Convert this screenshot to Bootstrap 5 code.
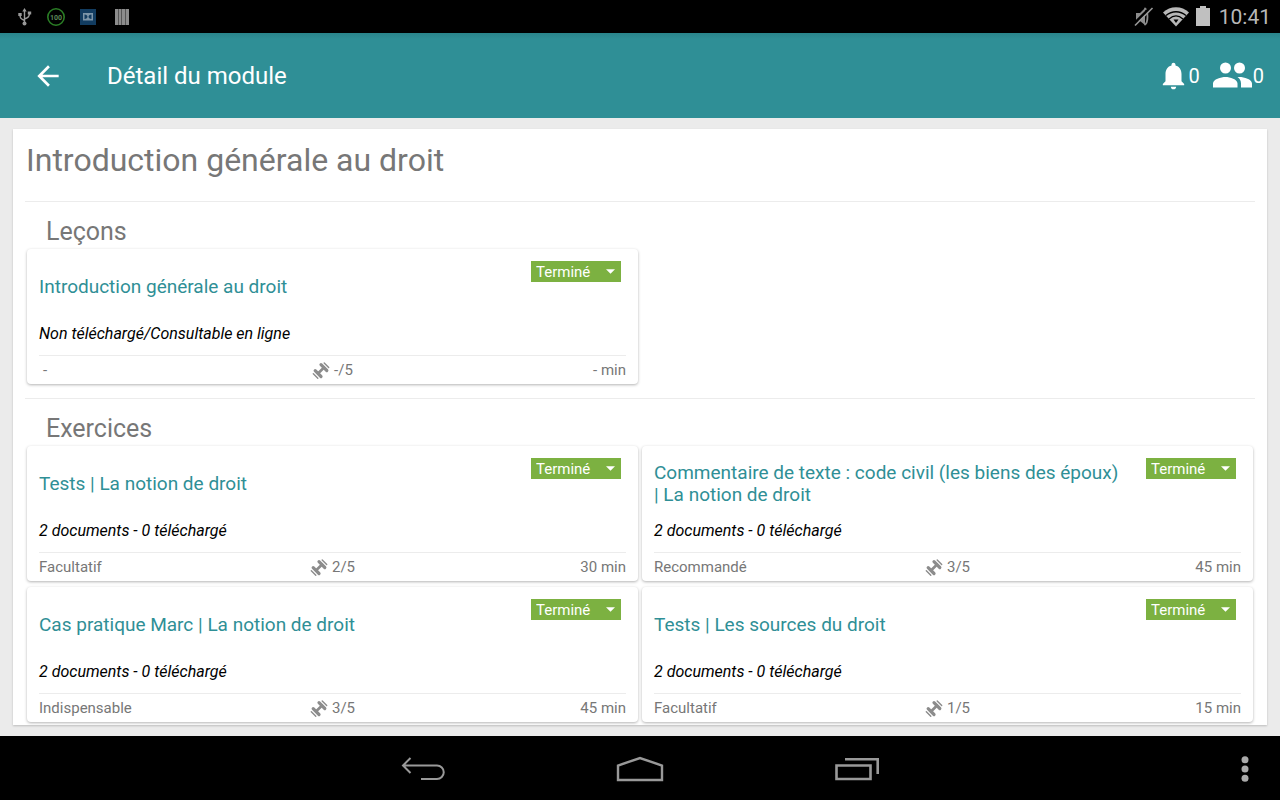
<!DOCTYPE html>
<html lang="fr">
<head>
<meta charset="utf-8">
<meta name="viewport" content="width=device-width, initial-scale=1">
<title>Détail du module</title>
<link href="https://cdn.jsdelivr.net/npm/bootstrap@5.3.0/dist/css/bootstrap.min.css" rel="stylesheet">
<style>
  body { font-family: Roboto, "Liberation Sans", sans-serif; background: #ebebeb; color: #777; }
  .status-bar { height: 33px; background: #000; color: #b8b8b8; font-size: 21px; padding: 0 9px 0 18px; }
  .status-bar .clock { padding-top: 2px; }
  .notices { gap: 15px; }
  .app-bar { height: 85px; background: linear-gradient(#2a858b, #2f8f96 6px); color: #fff; padding: 0 16px 0 32px; }
  .app-bar h1 { font-size: 24px; padding: 2px 0 0 43px; }
  .app-bar .counter { font-size: 20px; color: #fff; }
  .panel { background: #fff; margin: 11px 13px; padding: 0 12px; box-shadow: 0 1px 2px rgba(0,0,0,.2); scrollbar-width: none; }
  .module-title { font-size: 32px; line-height: 40px; padding: 11px 0 21px 1px; }
  .section-block { border-top: 1px solid #ececec; padding: 16px 2px 14px; }
  .section-title { font-size: 25px; line-height: 28px; padding: 0 0 3px 19px; }
  .tiles { display: grid; grid-template-columns: 1fr 1fr; gap: 6px 4px; }
  .tile { border: 0; border-radius: 4px; padding: 12px 12px 0; box-shadow: 0 1px 3px rgba(0,0,0,.3); color: #777; }
  .tile-head { min-height: 50px; }
  .tile-head h3 { font-size: 19px; line-height: 22px; max-width: 470px; padding-top: 2px; }
  .tile-head a { color: #2f8f96; }
  .state { width: 90px; height: 21px; flex: none; margin-right: 5px; padding: 1px 5px 0; border: 0; border-radius: 0; color: #fff; font-size: 15px; line-height: 20px;
    background: #7cb141 url("data:image/svg+xml,%3Csvg xmlns='http://www.w3.org/2000/svg' viewBox='0 0 10 5'%3E%3Cpath fill='%23fff' d='M0 0h10L5 5z'/%3E%3C/svg%3E") no-repeat right 6px center / 9px 5px; }
  .docs { font-size: 16px; line-height: 24px; color: #000; padding: 11px 0 9px; }
  .tile-foot { border-top: 1px solid #ececec; font-size: 15px; line-height: 28px; display: grid; grid-template-columns: 1fr auto 1fr; }
  .nav-bar { height: 64px; background: #000; display: grid; grid-template-columns: 1fr auto 1fr; padding-top: 2px; }
  .key { width: 217px; }
  .more { width: 70px; justify-self: end; }
  .bare { border: 0; background: none; padding: 0; }
</style>
</head>
<body class="vh-100 d-flex flex-column overflow-hidden">

<svg class="d-none" aria-hidden="true">
  <symbol id="dumbbell" viewBox="0 0 18 18">
    <g fill="none" stroke="#8c8c8c" stroke-linecap="round">
      <path stroke-width="2.600" d="M6 11.500l6-6"/>
      <path stroke-width="3.200" d="M3.200 8.700l5.800 5.800M9 2.700l5.800 5.800"/>
      <path stroke-width="1.400" d="M1.300 11.700l4.500 4.500M12.200 1l4.500 4.500"/>
    </g>
  </symbol>
</svg>

<div class="status-bar d-flex align-items-center justify-content-between">
  <div class="notices d-flex align-items-center">
    <svg width="14" height="18" viewBox="0 0 14 18" fill="none" stroke="#999" stroke-width="1.4"><path d="M6.5 2v14M6.5 12.5C2.5 11 2 10 2 6M6.5 11C10.500 9.500 11.500 8.500 11.500 5"/><path fill="#999" stroke="none" d="M6.500 0l2.200 3.500H4.300zM.3 5h3.400v3H.3zM9.800 3.500h3.400v3H9.800z"/><circle cx="6.500" cy="15.500" r="2" fill="#999" stroke="none"/></svg>
    <svg width="18" height="18" viewBox="0 0 18 18"><circle cx="9" cy="9" r="8.200" fill="none" stroke="#2a7d25" stroke-width="1.600"/><text x="9" y="11.500" text-anchor="middle" font-size="7" font-weight="bold" fill="#5c8a5a">100</text></svg>
    <svg width="16" height="16" viewBox="0 0 16 16"><path fill="#123c60" d="M0 0h16v16H0z"/><path fill="#7c95a8" d="M3 4h10v7.500H3z"/><path fill="#123c60" d="M4.500 5.500c4 0 4 4.500 0 4.500zM11.500 5.500c-4 0-4 4.500 0 4.500z"/></svg>
    <svg class="ms-1" width="14" height="16" viewBox="-1 0 14 16"><path fill="#8c8c8c" d="M-1 0h14v16H-1z"/><path stroke="#555" d="M2.500 0v16M5.500 0v16M9.500 0v16"/></svg>
  </div>
  <div class="d-flex align-items-center">
    <svg width="20" height="22" viewBox="0 0 20 22"><path fill="#8c8c8c" d="M2 7h4l5-5v17l-5-4H2z"/><path fill="none" stroke="#8c8c8c" stroke-width="1.800" d="M10.500 2c4 2 4 15 0 17"/><path stroke="#000" stroke-width="2.500" d="M0 17.500L17 1"/><path stroke="#999" stroke-width="1.600" d="M1 19.500L18.500 2"/></svg>
    <svg class="ms-2" width="28" height="20" viewBox="0 0 28 20"><path fill="#b8b8b8" d="M1 5.500C8-1.500 20-1.500 27 5.500L14 19.500z"/><path fill="none" stroke="#000" stroke-width="1.300" d="M4 8.500c6-5 14-5 20 0M7 12c4.500-4 9.500-4 14 0"/><path d="M11.500 12.500h5L14 16z"/></svg>
    <svg class="ms-1 me-2" width="17" height="21" viewBox="-2 0 17 21"><path fill="#c0c0c0" d="M4 0h6v2h4v18H0V2h4z"/></svg>
    <span class="clock">10:41</span>
  </div>
</div>

<header class="app-bar d-flex align-items-center">
  <button class="bare d-flex" type="button" aria-label="Retour"><svg width="32" height="32" viewBox="0 0 24 24" fill="#fff"><path d="M20 11H7.830l5.590-5.590L12 4l-8 8 8 8 1.410-1.410L7.830 13H20v-2z"/></svg></button>
  <h1 class="fw-normal mb-0 flex-grow-1">Détail du module</h1>
  <button class="bare counter d-flex align-items-center" type="button" aria-label="Notifications : 0"><svg width="31" height="32" viewBox="0 0 23 24" fill="#fff"><path d="M11.500 22c1.100 0 2-.9 2-2h-4c0 1.100.9 2 2 2zm6-6v-5.500c0-3.070-1.630-5.640-4.500-6.320V3.500c0-.83-.67-1.500-1.500-1.500S10 2.670 10 3.500v.68c-2.870.68-4.500 3.250-4.500 6.320V16l-2 2v1h16v-1l-2-2z"/></svg>0</button>
  <button class="bare counter d-flex align-items-center ms-2" type="button" aria-label="Contacts : 0"><svg width="45" height="42" viewBox="0 0 45 42" fill="#fff"><circle cx="17.500" cy="13" r="5.500"/><circle cx="31.500" cy="13" r="5.500"/><path d="M17.500 22c-4.500 0-12.500 2.200-12.500 6.500V32.500h24.500v-4c0-4.300-7.500-6.500-12-6.500zM31.500 22l-2 .1c2.200 1.600 3.500 3.700 3.500 6.400v4h11v-4c0-4.300-8-6.500-12.500-6.500z"/></svg>0</button>
</header>

<main class="panel flex-grow-1 overflow-auto">
  <h2 class="module-title fw-normal mb-0">Introduction générale au droit</h2>

  <section class="section-block">
    <h2 class="section-title fw-normal mb-0">Leçons</h2>
    <div class="tiles">
      <article class="card tile">
        <div class="tile-head d-flex justify-content-between">
          <h3 class="fw-normal mb-0 align-self-center"><a class="text-decoration-none" href="#">Introduction générale au droit</a></h3>
          <select class="form-select state" aria-label="État"><option>Terminé</option></select>
        </div>
        <div class="docs fst-italic">Non téléchargé/Consultable en ligne</div>
        <div class="tile-foot"><span class="ps-1">-</span><span><svg class="me-1" width="18" height="18"><use href="#dumbbell"/></svg>-/5</span><span class="text-end">- min</span></div>
      </article>
    </div>
  </section>

  <section class="section-block pb-0">
    <h2 class="section-title fw-normal mb-0">Exercices</h2>
    <div class="tiles">
      <article class="card tile">
        <div class="tile-head d-flex justify-content-between">
          <h3 class="fw-normal mb-0 align-self-center"><a class="text-decoration-none" href="#">Tests | La notion de droit</a></h3>
          <select class="form-select state" aria-label="État"><option>Terminé</option></select>
        </div>
        <div class="docs fst-italic">2 documents - 0 téléchargé</div>
        <div class="tile-foot"><span>Facultatif</span><span><svg class="me-1" width="18" height="18"><use href="#dumbbell"/></svg>2/5</span><span class="text-end">30 min</span></div>
      </article>
      <article class="card tile">
        <div class="tile-head d-flex justify-content-between">
          <h3 class="fw-normal mb-0 align-self-center"><a class="text-decoration-none" href="#">Commentaire de texte : code civil (les biens des époux) | La notion de droit</a></h3>
          <select class="form-select state" aria-label="État"><option>Terminé</option></select>
        </div>
        <div class="docs fst-italic">2 documents - 0 téléchargé</div>
        <div class="tile-foot"><span>Recommandé</span><span><svg class="me-1" width="18" height="18"><use href="#dumbbell"/></svg>3/5</span><span class="text-end">45 min</span></div>
      </article>
      <article class="card tile">
        <div class="tile-head d-flex justify-content-between">
          <h3 class="fw-normal mb-0 align-self-center"><a class="text-decoration-none" href="#">Cas pratique Marc | La notion de droit</a></h3>
          <select class="form-select state" aria-label="État"><option>Terminé</option></select>
        </div>
        <div class="docs fst-italic">2 documents - 0 téléchargé</div>
        <div class="tile-foot"><span>Indispensable</span><span><svg class="me-1" width="18" height="18"><use href="#dumbbell"/></svg>3/5</span><span class="text-end">45 min</span></div>
      </article>
      <article class="card tile">
        <div class="tile-head d-flex justify-content-between">
          <h3 class="fw-normal mb-0 align-self-center"><a class="text-decoration-none" href="#">Tests | Les sources du droit</a></h3>
          <select class="form-select state" aria-label="État"><option>Terminé</option></select>
        </div>
        <div class="docs fst-italic">2 documents - 0 téléchargé</div>
        <div class="tile-foot"><span>Facultatif</span><span><svg class="me-1" width="18" height="18"><use href="#dumbbell"/></svg>1/5</span><span class="text-end">15 min</span></div>
      </article>
    </div>
  </section>
</main>

<nav class="nav-bar" aria-label="Système">
  <span></span>
  <div class="d-flex">
    <button class="bare key" type="button" aria-label="Précédent"><svg width="44" height="26" viewBox="0 0 44 26" fill="none" stroke="#999" stroke-width="2"><path d="M9.500 2L2 9.500 9.500 17M2 9.500h34a6.500 6.500 0 0 1 0 13.500H20"/></svg></button>
    <button class="bare key" type="button" aria-label="Accueil"><svg width="48" height="26" viewBox="0 0 48 26" fill="none" stroke="#999" stroke-width="2.400"><path d="M2 24V9.500L24 2l22 7.500V24z"/></svg></button>
    <button class="bare key" type="button" aria-label="Applications récentes"><svg width="46" height="26" viewBox="0 0 46 26" fill="none" stroke="#999" stroke-width="2.600"><path d="M2.500 9.500h34v13.500h-34zM11 3.300h32.700V18"/></svg></button>
  </div>
  <button class="bare more" type="button" aria-label="Plus d'options"><svg width="8" height="26" viewBox="0 0 8 26" fill="#aaa"><circle cx="4" cy="3.700" r="3.500"/><circle cx="4" cy="13" r="3.500"/><circle cx="4" cy="22.300" r="3.500"/></svg></button>
</nav>

<script src="https://cdn.jsdelivr.net/npm/bootstrap@5.3.0/dist/js/bootstrap.bundle.min.js"></script>
</body>
</html>
